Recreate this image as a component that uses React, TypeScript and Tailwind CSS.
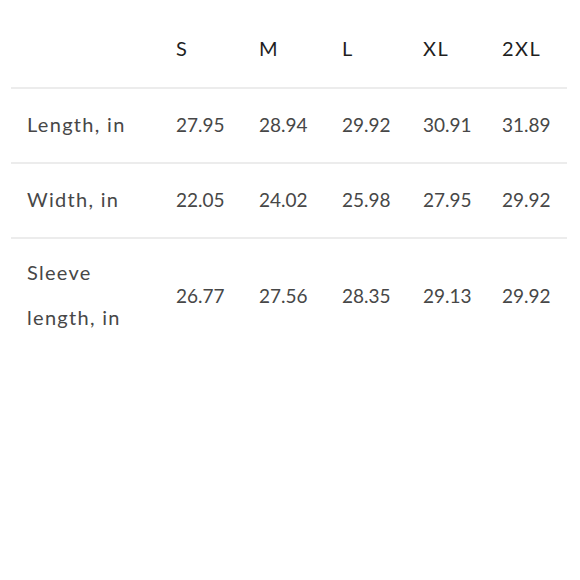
import React from 'react';

const sizes = ['S', 'M', 'L', 'XL', '2XL'];

const rows = [
  { label: 'Length, in', values: ['27.95', '28.94', '29.92', '30.91', '31.89'] },
  { label: 'Width, in', values: ['22.05', '24.02', '25.98', '27.95', '29.92'] },
  { label: 'Sleeve length, in', values: ['26.77', '27.56', '28.35', '29.13', '29.92'] },
];

const App = () => {
  return (
    <div className="w-[580px] h-[580px] bg-white pt-[10px] px-[11px]" style={{ fontFamily: 'Lato, "Open Sans", sans-serif' }}>
      <table className="w-[556px] table-fixed border-collapse text-[19px] leading-[45px]">
        <colgroup>
          <col className="w-[149px]" />
          <col className="w-[83px]" />
          <col className="w-[83px]" />
          <col className="w-[81px]" />
          <col className="w-[79px]" />
          <col className="w-[81px]" />
        </colgroup>
        <thead>
          <tr className="border-b-2 border-[#ececec]">
            <th className="py-4 pl-4" />
            {sizes.map((s) => (
              <th key={s} className="py-4 pl-4 text-left font-normal tracking-[1.5px] text-[20px] text-[#1f1f1f]">
                {s}
              </th>
            ))}
          </tr>
        </thead>
        <tbody className="text-[#474747]">
          {rows.map((row, i) => {
            const last = i === rows.length - 1;
            const pad = last ? 'pt-[11px] pb-[15px]' : 'pt-[13px] pb-[15px]';
            return (
              <tr key={row.label} className={last ? '' : 'border-b-2 border-[#ececec]'}>
                <td className={`${pad} pl-4 pr-4 text-[20px] tracking-[1.3px]`}>{row.label}</td>
                {row.values.map((v, j) => (
                  <td key={j} className={`${pad} pl-4`}>
                    {v}
                  </td>
                ))}
              </tr>
            );
          })}
        </tbody>
      </table>
    </div>
  );
};

export default App;
